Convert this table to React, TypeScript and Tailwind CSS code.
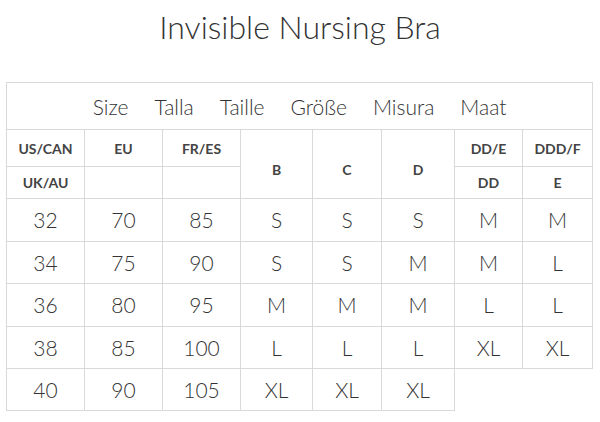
const HEAD_SIZES = ['Size', 'Talla', 'Taille', 'Größe', 'Misura', 'Maat']

const ROWS: string[][] = [
  ['32', '70', '85', 'S', 'S', 'S', 'M', 'M'],
  ['34', '75', '90', 'S', 'S', 'M', 'M', 'L'],
  ['36', '80', '95', 'M', 'M', 'M', 'L', 'L'],
  ['38', '85', '100', 'L', 'L', 'L', 'XL', 'XL'],
  ['40', '90', '105', 'XL', 'XL', 'XL'],
]

const COLS = [78, 78, 78, 72, 69, 73, 68, 70]
const ROW_H = [43, 42, 43, 42, 42]

const cell = 'border border-[#d9d9d9] text-center align-middle p-0'
const head = `${cell} text-[14px] font-bold text-[#444]`

export default function App() {
  return (
    <div className="w-[600px] h-[422px] bg-white text-[#333]" style={{ fontFamily: 'Lato, "Open Sans", sans-serif' }}>
      <h1 className="pt-[8px] h-[82px] text-center text-[32px] leading-[38px] font-light text-[#333]">
        Invisible Nursing Bra
      </h1>

      <table className="ml-[6px] table-fixed border-collapse" style={{ width: 587 }}>
        <colgroup>
          {COLS.map((w, i) => (
            <col key={i} style={{ width: w }} />
          ))}
        </colgroup>
        <tbody>
          <tr className="h-[47px]">
            <td colSpan={8} className={cell}>
              <div className="flex justify-center gap-[26px] text-[21px] font-light text-[#333] pt-[1px]">
                {HEAD_SIZES.map(s => (
                  <span key={s}>{s}</span>
                ))}
              </div>
            </td>
          </tr>
          <tr className="h-[37px]">
            <td className={head}>US/CAN</td>
            <td className={head}>EU</td>
            <td className={head}>FR/ES</td>
            <td rowSpan={2} className={`${head} pt-[10px]`}>B</td>
            <td rowSpan={2} className={`${head} pt-[10px]`}>C</td>
            <td rowSpan={2} className={`${head} pt-[10px]`}>D</td>
            <td className={head}>DD/E</td>
            <td className={head}>DDD/F</td>
          </tr>
          <tr className="h-[32px]">
            <td className={head}>UK/AU</td>
            <td className={head}></td>
            <td className={head}></td>
            <td className={head}>DD</td>
            <td className={head}>E</td>
          </tr>
          {ROWS.map((row, r) => (
            <tr key={r} style={{ height: ROW_H[r] }}>
              {row.map((v, c) => (
                <td key={c} className={`${cell} text-[21px] font-light`}>
                  {v}
                </td>
              ))}
            </tr>
          ))}
        </tbody>
      </table>
    </div>
  )
}
